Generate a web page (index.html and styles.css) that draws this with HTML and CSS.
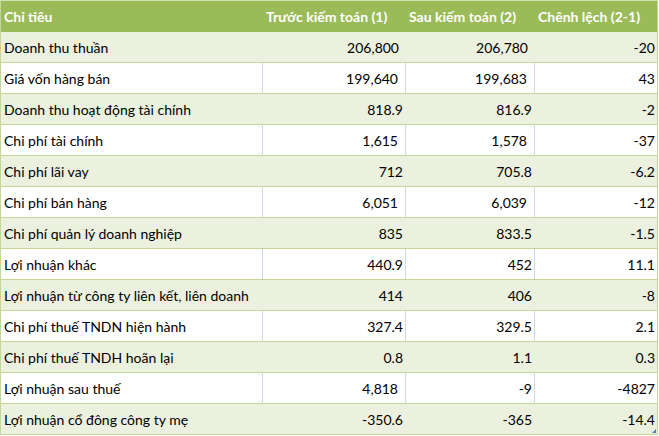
FILE: index.html
```html
<!DOCTYPE html>
<html lang="vi">
<head>
<meta charset="utf-8">
<title>Kiểm toán</title>
<link rel="stylesheet" href="styles.css">
</head>
<body>
<div class="sheet">
  <div class="row head">
    <div class="cell">Chỉ tiêu</div>
    <div class="cell">Trước kiếm toán (1)</div>
    <div class="cell">Sau kiếm toán (2)</div>
    <div class="cell">Chênh lệch (2-1)</div>
  </div>
  <div class="row band">
    <div class="cell">Doanh thu thuần</div>
    <div class="cell num acc">206,800</div>
    <div class="cell num acc">206,780</div>
    <div class="cell num">-20</div>
  </div>
  <div class="row plain">
    <div class="cell">Giá vốn hàng bán</div>
    <div class="cell num acc">199,640</div>
    <div class="cell num acc">199,683</div>
    <div class="cell num">43</div>
  </div>
  <div class="row band">
    <div class="cell">Doanh thu hoạt động tài chính</div>
    <div class="cell num">818.9</div>
    <div class="cell num">816.9</div>
    <div class="cell num">-2</div>
  </div>
  <div class="row plain">
    <div class="cell">Chi phí tài chính</div>
    <div class="cell num acc">1,615</div>
    <div class="cell num acc">1,578</div>
    <div class="cell num">-37</div>
  </div>
  <div class="row band">
    <div class="cell">Chi phí lãi vay</div>
    <div class="cell num">712</div>
    <div class="cell num">705.8</div>
    <div class="cell num">-6.2</div>
  </div>
  <div class="row plain">
    <div class="cell">Chi phí bán hàng</div>
    <div class="cell num acc">6,051</div>
    <div class="cell num acc">6,039</div>
    <div class="cell num">-12</div>
  </div>
  <div class="row band">
    <div class="cell">Chi phí quản lý doanh nghiệp</div>
    <div class="cell num">835</div>
    <div class="cell num">833.5</div>
    <div class="cell num">-1.5</div>
  </div>
  <div class="row plain">
    <div class="cell">Lợi nhuận khác</div>
    <div class="cell num">440.9</div>
    <div class="cell num">452</div>
    <div class="cell num">11.1</div>
  </div>
  <div class="row band">
    <div class="cell">Lợi nhuận từ công ty liên kết, liên doanh</div>
    <div class="cell num">414</div>
    <div class="cell num">406</div>
    <div class="cell num">-8</div>
  </div>
  <div class="row plain">
    <div class="cell">Chi phí thuế TNDN hiện hành</div>
    <div class="cell num">327.4</div>
    <div class="cell num">329.5</div>
    <div class="cell num">2.1</div>
  </div>
  <div class="row band">
    <div class="cell">Chi phí thuế TNDH hoãn lại</div>
    <div class="cell num">0.8</div>
    <div class="cell num">1.1</div>
    <div class="cell num">0.3</div>
  </div>
  <div class="row plain">
    <div class="cell">Lợi nhuận sau thuế</div>
    <div class="cell num acc">4,818</div>
    <div class="cell num">-9</div>
    <div class="cell num">-4827</div>
  </div>
  <div class="row band last">
    <div class="cell">Lợi nhuận cổ đông công ty mẹ</div>
    <div class="cell num">-350.6</div>
    <div class="cell num">-365</div>
    <div class="cell num corner">-14.4</div>
  </div>
</div>
</body>
</html>
```
FILE: styles.css
```css
html, body {
  margin: 0;
  padding: 0;
  background: #ffffff;
}

body {
  font-family: Lato, "Open Sans", "Liberation Sans", sans-serif;
  font-size: 14px;
  color: #000000;
}

.sheet {
  width: 658px;
  box-sizing: border-box;
  border-top: 1px solid #d4e2b4;
  border-left: 1px solid #c4d79b;
  border-right: 1px solid #c4d79b;
}

.row {
  display: grid;
  grid-template-columns: 262px 143px 129px 122px;
  height: 31px;
  box-sizing: border-box;
  border-bottom: 1px solid #c4d79b;
}

.cell {
  box-sizing: border-box;
  padding: 0 3px;
  display: flex;
  align-items: center;
  white-space: nowrap;
  overflow: hidden;
}

.head {
  background: #9bbb59;
  color: #ffffff;
  font-weight: bold;
  border-bottom: none;
}

.band {
  background: #ebf1de;
}

.plain {
  background: #ffffff;
}

.plain .cell {
  border-right: 1px solid #d0d7e5;
}

.plain .cell:last-child {
  border-right: none;
}

.num {
  justify-content: flex-end;
  padding-right: 2px;
}

.plain .num {
  padding-right: 2px;
}

.band .num {
  padding-right: 3px;
}

.band .num:last-child,
.plain .num:last-child {
  padding-right: 2px;
}

.num.acc {
  padding-right: 7px;
}

.plain .num.acc {
  padding-right: 7px;
}

.corner {
  position: relative;
}

.corner::after {
  content: "";
  position: absolute;
  right: 1px;
  bottom: 1px;
  width: 0;
  height: 0;
  border-left: 4px solid transparent;
  border-bottom: 4px solid #4f81bd;
}
```
